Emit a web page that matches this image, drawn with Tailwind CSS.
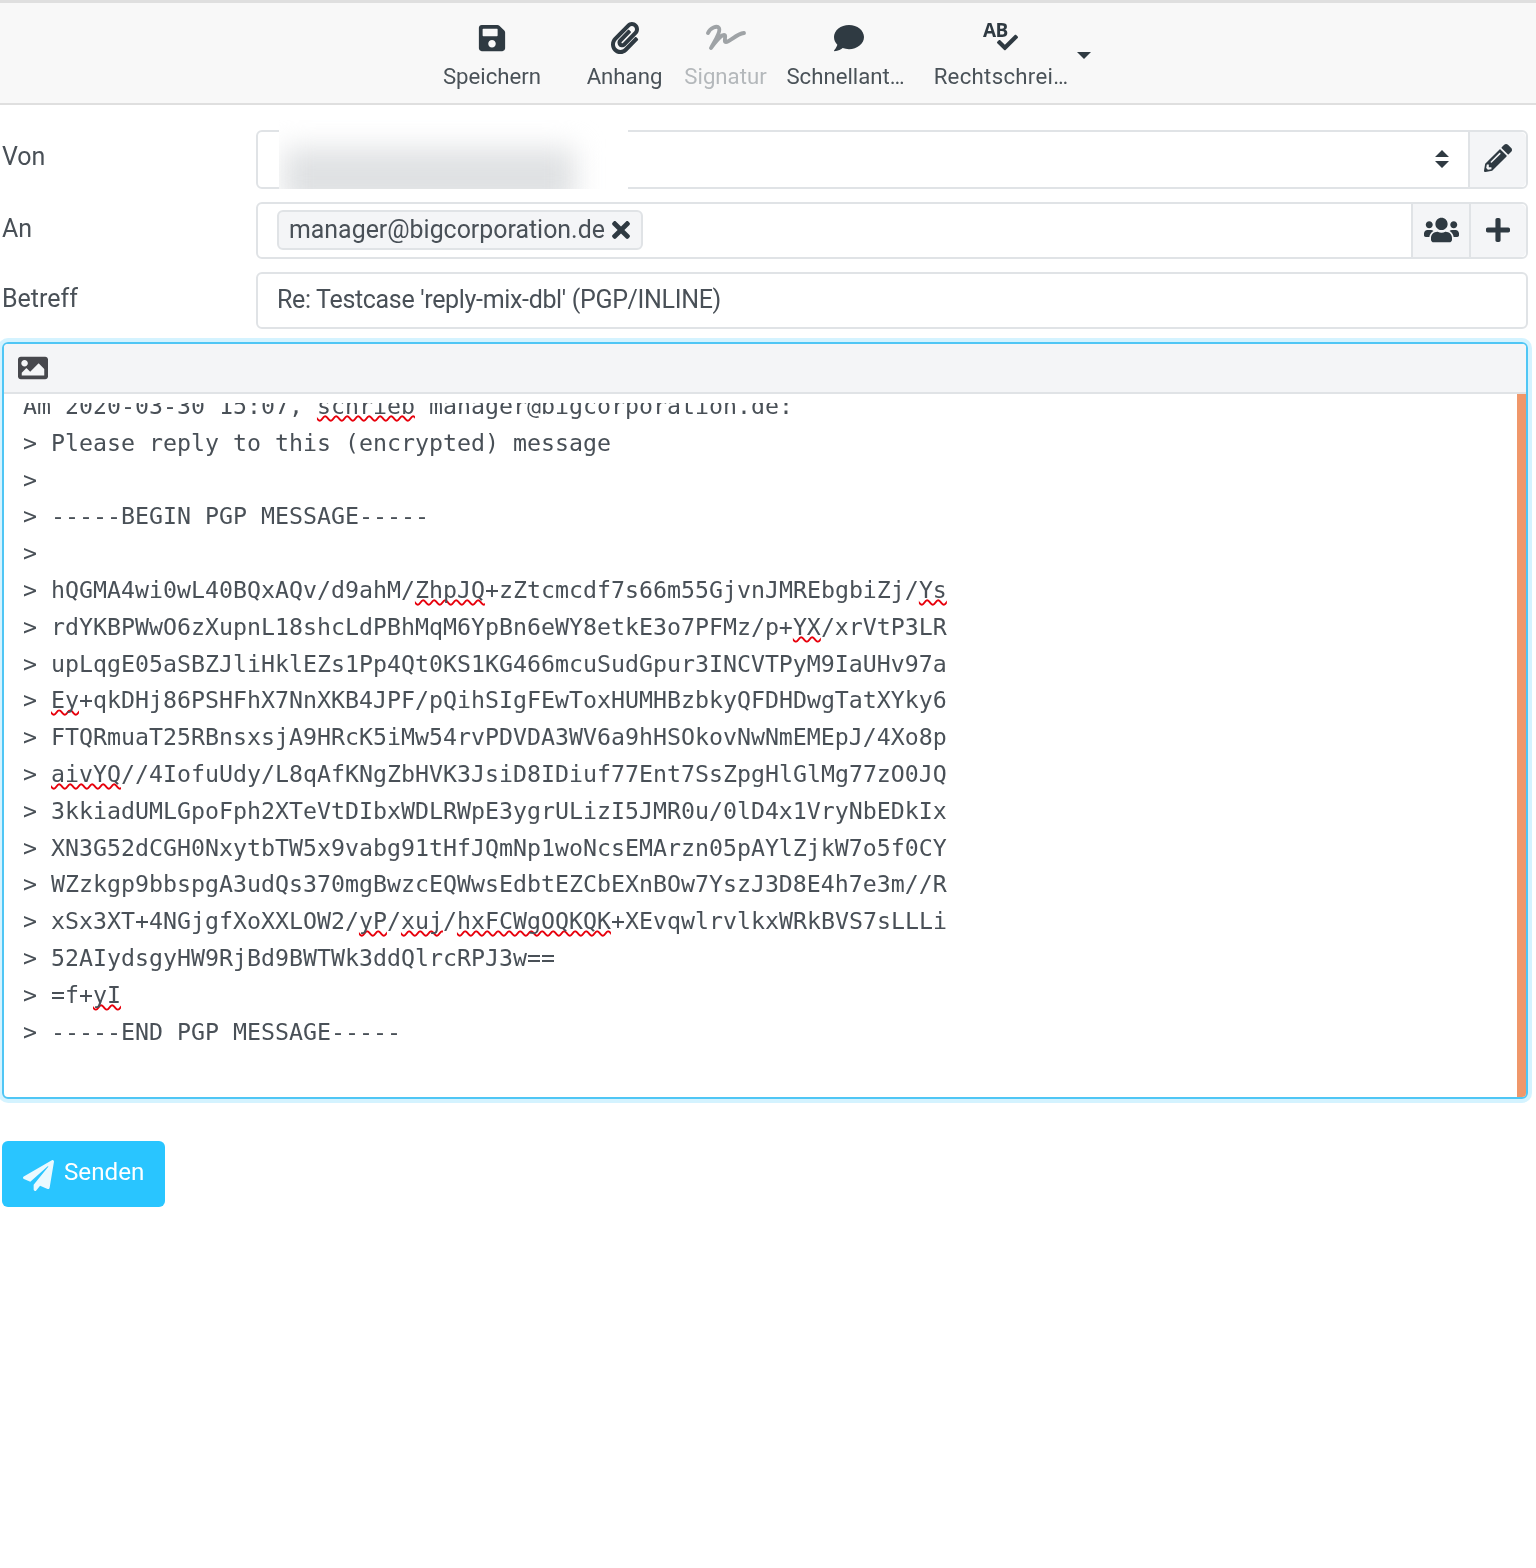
<!DOCTYPE html>
<html lang="de"><head><meta charset="utf-8"><script src="https://cdn.jsdelivr.net/npm/@tailwindcss/browser@4"></script></head>
<body class="bg-white text-[#495057] font-['Roboto',sans-serif]">
<div class="w-[1536px] h-[1568px] overflow-hidden bg-white blur-[0.5px]">
  <!-- toolbar -->
  <div class="h-[105px] bg-[#f8f8f8] border-t-[3px] border-b-2 border-[#dfdfdf] flex pl-[443px] text-[22.2px] leading-[26px] text-[#4a5258]">
    <div class="flex flex-col items-center w-[98px]">
      <svg class="mt-[20px] h-[30px] w-[28px] fill-[#2f3a42]" viewBox="0 0 448 512"><path d="M433.941 129.941l-83.882-83.882A48 48 0 0 0 316.118 32H48C21.49 32 0 53.49 0 80v352c0 26.51 21.49 48 48 48h352c26.51 0 48-21.49 48-48V163.882a48 48 0 0 0-14.059-33.941zM224 416c-35.346 0-64-28.654-64-64 0-35.346 28.654-64 64-64s64 28.654 64 64c0 35.346-28.654 64-64 64zm96-304.52V212c0 6.627-5.373 12-12 12H76c-6.627 0-12-5.373-12-12V108c0-6.627 5.373-12 12-12h228.52c3.183 0 6.235 1.264 8.485 3.515l3.48 3.48A11.996 11.996 0 0 1 320 111.48z"/></svg>
      <span class="mt-[10px] whitespace-nowrap">Speichern</span>
    </div>
    <div class="flex flex-col items-center w-[75px] ml-[46px]">
      <svg class="mt-[19px] h-[32px] w-[28px] fill-[#2f3a42]" viewBox="0 0 448 512"><path d="M43.246 466.142c-58.43-60.289-57.341-157.511 1.386-217.581L254.392 34c44.316-45.332 116.351-45.336 160.671 0 43.89 44.894 43.943 117.329 0 162.276L232.214 383.128c-29.855 30.537-78.633 30.111-107.982-.998-28.275-29.97-27.368-77.473 1.452-106.953l143.743-146.835c6.182-6.314 16.312-6.422 22.626-.241l22.861 22.379c6.315 6.182 6.422 16.312.241 22.626L171.427 319.927c-4.932 5.045-5.236 13.428-.648 18.292 4.372 4.634 11.245 4.711 15.688.165l182.849-186.851c19.613-20.062 19.613-52.725-.011-72.798-19.189-19.627-49.957-19.637-69.154 0L90.39 293.295c-34.763 35.56-35.299 93.12-1.191 128.313 34.01 35.093 88.985 35.137 123.058.286l172.06-175.999c6.177-6.319 16.307-6.433 22.626-.256l22.877 22.364c6.319 6.177 6.434 16.307.256 22.626l-172.06 175.998c-59.576 60.938-155.943 60.216-214.77-.485z"/></svg>
      <span class="mt-[9px] whitespace-nowrap">Anhang</span>
    </div>
    <div class="flex flex-col items-center w-[81px] ml-[23px] text-[#b4b8bb]">
      <svg class="mt-[21px] h-[26px] w-[40px]" viewBox="0 0 40 26" fill="none" stroke="#9fa3a6" stroke-width="3.8" stroke-linecap="round" stroke-linejoin="round"><path d="M2 9C4 4 11 1 13 4C15 8 8 18 5 24C10 18 14 11 18 11C21 11 17 18 20 18C24 18 30 10 38 9"/></svg>
      <span class="mt-[13px] whitespace-nowrap">Signatur</span>
    </div>
    <div class="flex flex-col items-center w-[119px] ml-[20px]">
      <svg class="mt-[20px] ml-[6px] h-[30px] w-[32px] fill-[#2f3a42]" viewBox="0 0 512 512"><path d="M256 32C114.6 32 0 125.1 0 240c0 49.6 21.4 95 57 130.7C44.5 421.1 2.7 466 2.2 466.5c-2.2 2.3-2.8 5.7-1.5 8.7S4.8 480 8 480c66.3 0 116-31.8 140.6-51.4 32.7 12.3 69 19.4 107.4 19.4 141.4 0 256-93.1 256-208S397.4 32 256 32z"/></svg>
      <span class="mt-[10px] whitespace-nowrap">Schnellant…</span>
    </div>
    <div class="flex flex-col items-center w-[134px] ml-[29px]">
      <div class="relative mt-[17px] h-[33px] w-[36px]">
        <span class="absolute left-0 top-0 text-[19px] leading-[21px] font-bold text-[#2f3a42] font-['Open_Sans',sans-serif] tracking-[-0.5px]">AB</span>
        <svg class="absolute left-[14px] top-[12px] h-[21px] w-[21px] fill-[#2f3a42]" viewBox="0 0 512 512"><path d="M173.898 439.404l-166.4-166.4c-9.997-9.997-9.997-26.206 0-36.204l36.203-36.204c9.997-9.998 26.207-9.998 36.204 0L192 312.69 432.095 72.596c9.997-9.997 26.207-9.997 36.204 0l36.203 36.204c9.997 9.997 9.997 26.206 0 36.204l-294.4 294.401c-9.998 9.997-26.207 9.997-36.204-.001z"/></svg>
      </div>
      <span class="mt-[10px] whitespace-nowrap tracking-[0.3px]">Rechtschrei…</span>
    </div>
    <div class="ml-[9px] mt-[49px] h-0 w-0 border-x-[7px] border-x-transparent border-t-[7px] border-t-[#2f3a42]"></div>
  </div>

  <!-- form -->
  <div class="pl-[2px] pr-2 text-[25px] leading-[30px]">
    <div class="flex items-start mt-[25px]">
      <div class="w-[254px] pt-[12px]">Von</div>
      <div class="relative flex flex-1 h-[59px] border-2 border-[#e0e3e6] rounded-md">
        <div class="flex-1 flex items-center justify-end pr-[19px]">
          <svg class="w-[14px] h-[20px] fill-[#2f3a42] -mt-[1px]" viewBox="0 0 14 20"><path d="M7 1L14 8H0ZM7 19L0 12H14Z"/></svg>
        </div>
        <div class="w-[58px] bg-[#f4f5f7] border-l-2 border-[#e0e3e6] rounded-r-md flex items-center justify-center">
          <svg class="w-[28px] h-[28px] fill-[#2f3a42] -mt-[3px]" viewBox="0 0 512 512"><path d="M497.9 142.1l-46.1 46.1c-4.7 4.7-12.3 4.7-17 0l-111-111c-4.7-4.7-4.7-12.3 0-17l46.1-46.1c18.7-18.7 49.1-18.7 67.9 0l60.1 60.1c18.8 18.7 18.8 49.1 0 67.9zM284.2 99.8L21.6 362.4.4 483.9c-2.9 16.4 11.4 30.6 27.8 27.8l121.5-21.3 262.6-262.6c4.7-4.7 4.7-12.3 0-17l-111-111c-4.8-4.7-12.4-4.7-17.1 0zM124.1 339.9c-5.5-5.5-5.5-14.3 0-19.8l154-154c5.5-5.5 14.3-5.5 19.8 0s5.5 14.3 0 19.8l-154 154c-5.5 5.5-14.3 5.5-19.8 0zM88 424h48v36.3l-64.5 11.3-31.1-31.1L51.7 376H88v48z"/></svg>
        </div>
        <!-- redaction overlay -->
        <div class="absolute left-[21px] top-[-12px] w-[349px] h-[69px] bg-white overflow-hidden">
          <div class="absolute left-[4px] top-[28px] w-[292px] h-[60px] bg-[#dfe1e3] blur-[14px]"></div>
        </div>
      </div>
    </div>

    <div class="flex items-start mt-[13px]">
      <div class="w-[254px] pt-[12px]">An</div>
      <div class="flex flex-1 h-[57px] border-2 border-[#e0e3e6] rounded-md">
        <div class="flex-1 pl-[19px] pt-[6px]">
          <div class="inline-flex items-center h-[40px] pl-[10px] pr-[11px] bg-[#f4f5f7] border-2 border-[#e0e3e6] rounded-md text-[#495057]">
            <span class="text-[24.9px] -mt-[1px]">manager@bigcorporation.de</span>
            <svg class="ml-[7px] w-[18px] h-[26px] fill-[#2f3a42] -mt-[1px]" viewBox="0 0 352 512"><path d="M242.72 256l100.07-100.07c12.28-12.28 12.28-32.19 0-44.48l-22.24-22.24c-12.28-12.28-32.19-12.28-44.48 0L176 189.28 75.93 89.21c-12.28-12.28-32.19-12.28-44.48 0L9.21 111.45c-12.28 12.28-12.28 32.19 0 44.48L109.28 256 9.21 356.07c-12.28 12.28-12.28 32.19 0 44.48l22.24 22.24c12.28 12.28 32.2 12.28 44.48 0L176 322.72l100.07 100.07c12.28 12.28 32.2 12.28 44.48 0l22.24-22.24c12.28-12.28 12.28-32.19 0-44.48L242.72 256z"/></svg>
          </div>
        </div>
        <div class="w-[58px] bg-[#f4f5f7] border-l-2 border-[#e0e3e6] flex items-center justify-center">
          <svg class="w-[35px] h-[28px] fill-[#2f3a42] -mt-[2px]" viewBox="0 0 640 512"><path d="M96 224c35.3 0 64-28.7 64-64s-28.7-64-64-64-64 28.7-64 64 28.7 64 64 64zm448 0c35.3 0 64-28.7 64-64s-28.7-64-64-64-64 28.7-64 64 28.7 64 64 64zm32 32h-64c-17.6 0-33.5 7.1-45.1 18.6 40.3 22.1 68.9 62 75.1 109.4h66c17.7 0 32-14.3 32-32v-32c0-35.3-28.7-64-64-64zm-256 0c61.9 0 112-50.1 112-112S381.9 32 320 32 208 82.1 208 144s50.1 112 112 112zm76.8 32h-8.3c-20.8 10-43.9 16-68.5 16s-47.6-6-68.5-16h-8.3C179.6 288 128 339.6 128 403.2V432c0 26.5 21.5 48 48 48h288c26.5 0 48-21.5 48-48v-28.8c0-63.6-51.6-115.2-115.2-115.2zm-223.7-13.4C161.5 263.1 145.6 256 128 256H64c-35.3 0-64 28.7-64 64v32c0 17.7 14.3 32 32 32h65.9c6.3-47.4 34.9-87.3 75.2-109.4z"/></svg>
        </div>
        <div class="w-[57px] bg-[#f4f5f7] border-l-2 border-[#e0e3e6] rounded-r-md flex items-center justify-center">
          <svg class="w-[24px] h-[28px] fill-[#2f3a42] -mt-[2px] -ml-[2px]" viewBox="0 0 448 512"><path d="M416 208H272V64c0-17.67-14.33-32-32-32h-32c-17.67 0-32 14.33-32 32v144H32c-17.67 0-32 14.33-32 32v32c0 17.67 14.33 32 32 32h144v144c0 17.67 14.33 32 32 32h32c17.67 0 32-14.33 32-32V304h144c17.67 0 32-14.33 32-32v-32c0-17.67-14.33-32-32-32z"/></svg>
        </div>
      </div>
    </div>

    <div class="flex items-start mt-[13px]">
      <div class="w-[254px] pt-[12px]">Betreff</div>
      <div class="flex-1 h-[57px] border-2 border-[#e0e3e6] rounded-md pl-[19px] pt-[11px] text-[25px] tracking-[-0.33px]">Re: Testcase 'reply-mix-dbl' (PGP/INLINE)</div>
    </div>
  </div>

  <!-- editor -->
  <div class="ml-[2px] mt-[13px] w-[1526px] h-[757px] border-2 border-[#4fc6f5] rounded-md shadow-[0_0_0_4px_rgba(41,197,255,0.2)] overflow-hidden">
    <div class="h-[50px] bg-[#f4f5f7] border-b-2 border-[#e0e3e6] flex items-center pl-[14px]">
      <svg class="w-[30px] h-[30px] fill-[#47484d]" viewBox="0 0 512 512"><path d="M464 448H48c-26.51 0-48-21.49-48-48V112c0-26.51 21.49-48 48-48h416c26.51 0 48 21.49 48 48v288c0 26.51-21.49 48-48 48zM112 120c-30.928 0-56 25.072-56 56s25.072 56 56 56 56-25.072 56-56-25.072-56-56-56zM64 384h384V272l-87.515-87.515c-4.686-4.686-12.284-4.686-16.971 0L208 320l-55.515-55.515c-4.686-4.686-12.284-4.686-16.971 0L64 336v48z"/></svg>
    </div>
    <div class="flex h-[703px]">
      <div class="flex-1 pt-[9px]">
      <div class="h-[694px] overflow-hidden">
      <pre class="pl-[19px] -mt-[15px] font-['DejaVu_Sans_Mono',monospace] text-[23.25px] leading-[36.8px] text-[#495057] [text-decoration-skip-ink:none]">Am 2020-03-30 15:07, <span class="underline decoration-wavy decoration-red-600 decoration-[1.5px]">schrieb</span> manager@bigcorporation.de:
&gt; Please reply to this (encrypted) message
&gt;
&gt; -----BEGIN PGP MESSAGE-----
&gt;
&gt; hQGMA4wi0wL40BQxAQv/d9ahM/<span class="underline decoration-wavy decoration-red-600 decoration-[1.5px]">ZhpJQ</span>+zZtcmcdf7s66m55GjvnJMREbgbiZj/<span class="underline decoration-wavy decoration-red-600 decoration-[1.5px]">Ys</span>
&gt; rdYKBPWwO6zXupnL18shcLdPBhMqM6YpBn6eWY8etkE3o7PFMz/p+<span class="underline decoration-wavy decoration-red-600 decoration-[1.5px]">YX</span>/xrVtP3LR
&gt; upLqgE05aSBZJliHklEZs1Pp4Qt0KS1KG466mcuSudGpur3INCVTPyM9IaUHv97a
&gt; <span class="underline decoration-wavy decoration-red-600 decoration-[1.5px]">Ey</span>+qkDHj86PSHFhX7NnXKB4JPF/pQihSIgFEwToxHUMHBzbkyQFDHDwgTatXYky6
&gt; FTQRmuaT25RBnsxsjA9HRcK5iMw54rvPDVDA3WV6a9hHSOkovNwNmEMEpJ/4Xo8p
&gt; <span class="underline decoration-wavy decoration-red-600 decoration-[1.5px]">aivYQ</span>//4IofuUdy/L8qAfKNgZbHVK3JsiD8IDiuf77Ent7SsZpgHlGlMg77zO0JQ
&gt; 3kkiadUMLGpoFph2XTeVtDIbxWDLRWpE3ygrULizI5JMR0u/0lD4x1VryNbEDkIx
&gt; XN3G52dCGH0NxytbTW5x9vabg91tHfJQmNp1woNcsEMArzn05pAYlZjkW7o5f0CY
&gt; WZzkgp9bbspgA3udQs370mgBwzcEQWwsEdbtEZCbEXnBOw7YszJ3D8E4h7e3m//R
&gt; xSx3XT+4NGjgfXoXXLOW2/<span class="underline decoration-wavy decoration-red-600 decoration-[1.5px]">yP</span>/<span class="underline decoration-wavy decoration-red-600 decoration-[1.5px]">xuj</span>/<span class="underline decoration-wavy decoration-red-600 decoration-[1.5px]">hxFCWgOQKQK</span>+XEvqwlrvlkxWRkBVS7sLLLi
&gt; 52AIydsgyHW9RjBd9BWTWk3ddQlrcRPJ3w==
&gt; =f+<span class="underline decoration-wavy decoration-red-600 decoration-[1.5px]">yI</span>
&gt; -----END PGP MESSAGE-----</pre>
      </div>
      </div>
      <div class="w-[9px] bg-[#f0976a]"></div>
    </div>
  </div>

  <!-- send -->
  <div class="ml-[2px] mt-[42px] w-[163px] h-[66px] bg-[#29c5ff] rounded-md flex items-center pl-[21px] text-white text-[24.2px]">
    <svg class="w-[31px] h-[31px] fill-[#eaf9ff] mt-[3px]" viewBox="0 0 512 512"><path d="M476 3.2L12.5 270.6c-18.1 10.4-15.8 35.6 2.2 43.2L121 358.4l287.3-253.2c5.5-4.9 13.3 2.6 8.6 8.3L176 407v80.5c0 23.6 28.5 32.9 42.5 15.8L282 426l124.6 52.2c14.2 6 30.4-2.9 33-18.2l72-432C515 7.8 493.3-6.8 476 3.2z"/></svg>
    <span class="ml-[10px] -mt-[3px]">Senden</span>
  </div>
</div>
</body></html>
